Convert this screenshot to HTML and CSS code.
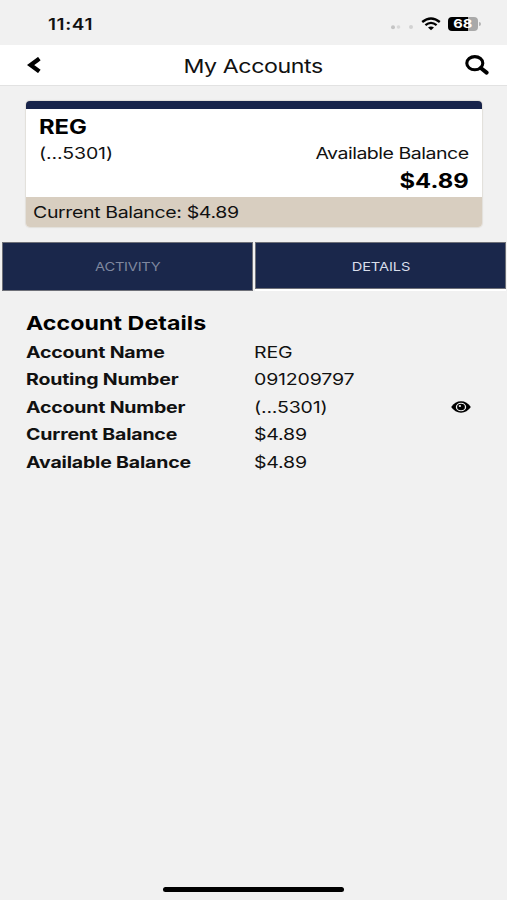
FILE: index.html
```html
<!DOCTYPE html>
<html lang="en">
<head>
    <meta charset="UTF-8">
    <meta name="viewport" content="width=device-width, initial-scale=1.0">
    <title>My Accounts</title>
    <link rel="stylesheet" href="styles.css">
</head>
<body>
    <div class="status-bar">
        <span class="time wide">11:41</span>
        <div class="status-icons">
            <svg class="signal" width="24" height="6" viewBox="0 0 24 6">
                <circle cx="3" cy="3.2" r="2" fill="#c4c4c4"/>
                <circle cx="8.5" cy="3" r="1.8" fill="#d9d9d9"/>
                <circle cx="21" cy="3" r="2" fill="#d2d2d2"/>
            </svg>
            <svg class="wifi" width="20" height="14" viewBox="0 0 20 14">
                <path d="M1.2 5 Q10 -2.2 18.8 5" fill="none" stroke="#000" stroke-width="2.4"/>
                <path d="M4.4 8.2 Q10 3.6 15.6 8.2" fill="none" stroke="#000" stroke-width="2.3"/>
                <path d="M7 10.6 Q10 8.4 13 10.6 L10 13.2 Z" fill="#000"/>
            </svg>
            <div class="battery"><span class="level wide">68</span></div>
            <div class="battery-tip"></div>
        </div>
    </div>

    <header class="header">
        <svg class="back" width="14" height="16" viewBox="0 0 14 16">
            <path d="M10.6 2.9 L3.6 8 L10.6 13.1" fill="none" stroke="#000" stroke-width="4.3" stroke-linecap="square"/>
        </svg>
        <h1 class="title wide">My Accounts</h1>
        <svg class="search" width="24" height="20" viewBox="0 0 24 20">
            <ellipse cx="9.8" cy="8.2" rx="8" ry="6.6" fill="none" stroke="#000" stroke-width="3.1"/>
            <path d="M15.8 13 L21.6 17.6" stroke="#000" stroke-width="4" stroke-linecap="round"/>
        </svg>
    </header>

    <section class="card">
        <div class="card-body">
            <div><span class="card-name wide">REG</span></div>
            <div class="card-row">
                <span class="card-number wide">(...5301)</span>
                <span class="card-label wide right">Available Balance</span>
            </div>
            <div class="card-row end"><span class="card-amount wide right">$4.89</span></div>
        </div>
        <div class="card-footer"><span class="card-current wide">Current Balance: $4.89</span></div>
    </section>

    <nav class="tabs">
        <button class="tab"><span class="wide center">ACTIVITY</span></button>
        <button class="tab active"><span class="wide center">DETAILS</span></button>
    </nav>

    <main class="details">
        <h2 class="wide">Account Details</h2>
        <dl>
            <dt><span class="wide">Account Name</span></dt>
            <dd><span class="wide">REG</span></dd>
            <dt><span class="wide">Routing Number</span></dt>
            <dd><span class="wide">091209797</span></dd>
            <dt><span class="wide">Account Number</span></dt>
            <dd>
                <span class="wide">(...5301)</span>
                <svg class="eye" width="20" height="12" viewBox="0 0 20 12">
                    <path d="M0.2 6 Q4 0.3 10 0.3 Q16 0.3 19.8 6 Q16 11.7 10 11.7 Q4 11.7 0.2 6 Z" fill="#000"/>
                    <ellipse cx="10" cy="6" rx="5.2" ry="4.3" fill="#f1f1f1"/>
                    <ellipse cx="10" cy="6" rx="3.9" ry="3.2" fill="#000"/>
                    <ellipse cx="8.9" cy="4.9" rx="1.2" ry="1" fill="#f1f1f1"/>
                </svg>
            </dd>
            <dt><span class="wide">Current Balance</span></dt>
            <dd><span class="wide">$4.89</span></dd>
            <dt><span class="wide">Available Balance</span></dt>
            <dd><span class="wide">$4.89</span></dd>
        </dl>
    </main>

    <div class="home-indicator"></div>
</body>
</html>
```
FILE: styles.css
```css
* {
    box-sizing: border-box;
}

body {
    margin: 0;
    height: 900px;
    display: flex;
    flex-direction: column;
    overflow: hidden;
    font-family: Inter, "Liberation Sans", sans-serif;
    background-color: #f1f1f1;
    color: #111;
}

/* Extended letterforms */
.wide {
    display: inline-block;
    white-space: nowrap;
    transform: scaleX(1.22);
    transform-origin: left center;
}

.wide.right {
    transform-origin: right center;
}

.wide.center {
    transform-origin: center;
}

.status-bar {
    height: 45px;
    padding: 2px 26px 0 48px;
    display: flex;
    align-items: center;
    justify-content: space-between;
}

.time {
    padding-top: 1px;
    font-size: 15.5px;
    font-weight: 600;
    letter-spacing: 0.5px;
}

.status-icons {
    display: flex;
    align-items: center;
}

.signal {
    margin: 7px 7px 0 0;
}

.wifi {
    margin-right: 7px;
}

.battery {
    width: 30px;
    height: 14px;
    border-radius: 4px;
    background: linear-gradient(to right, #000 68%, #a9a9a9 68%);
    display: flex;
    align-items: center;
    justify-content: center;
}

.level {
    font-size: 12px;
    font-weight: 700;
    line-height: 14px;
    color: #fff;
    transform-origin: center;
}

.battery-tip {
    width: 2px;
    height: 4px;
    margin-left: 1px;
    border-radius: 0 2px 2px 0;
    background-color: #b5b5b5;
}

.header {
    height: 41px;
    padding: 0 18px 0 27px;
    display: flex;
    align-items: center;
    justify-content: space-between;
    background-color: #fff;
    border-bottom: 1px solid #e2e2e2;
}

.title {
    margin: 2px 0 0;
    font-size: 19px;
    font-weight: 400;
    letter-spacing: -0.35px;
    transform-origin: center;
}

.card {
    height: 126px;
    margin: 15px 25px 0 26px;
    display: flex;
    flex-direction: column;
    border-top: 8px solid #18244a;
    border-radius: 4px;
    background-color: #fff;
    box-shadow: 0 0 1px 1px #e2dfda;
    overflow: hidden;
}

.card-body {
    flex: 1;
    padding: 4px 13px 0;
}

.card-body > div {
    height: 27px;
    line-height: 27px;
}

.card-row {
    display: flex;
    justify-content: space-between;
}

.card-row.end {
    justify-content: flex-end;
}

.card-name,
.card-amount {
    padding-top: 1px;
    font-size: 19.5px;
    font-weight: 700;
    color: #000;
}

.card-number,
.card-label,
.card-current {
    font-size: 16px;
    letter-spacing: -0.3px;
}

.card-number {
    letter-spacing: -0.1px;
}

.card-label {
    letter-spacing: -0.4px;
}

.card-footer {
    height: 30px;
    padding-left: 7px;
    line-height: 31px;
    background-color: #d8cec0;
}

.tabs {
    margin-top: 15px;
    padding: 0 1px 0 2px;
    display: flex;
    align-items: flex-start;
    gap: 2px;
}

.tab {
    flex: 1;
    height: 49px;
    padding: 0;
    border: 1px solid #6e7078;
    background-color: #1a274b;
    color: #7f879f;
    font-family: inherit;
    font-size: 12px;
    letter-spacing: -0.2px;
}

.tab.active {
    height: 47px;
    padding-top: 1px;
    color: #d9deeb;
    letter-spacing: -0.1px;
    box-shadow: 0 2px 0 #fff;
}

.details {
    flex: 1;
    padding: 19px 26px 0;
}

.details h2 {
    margin: 0;
    font-size: 19px;
    font-weight: 700;
    line-height: 27px;
    letter-spacing: 0.05px;
    color: #000;
}

.details dl {
    margin: 2px 0 0;
    display: grid;
    grid-template-columns: 228px 1fr;
    grid-auto-rows: 27.4px;
    font-size: 16px;
    line-height: 27.4px;
}

.details dt {
    font-weight: 700;
    letter-spacing: -0.15px;
}

.details dd {
    margin: 0;
    display: flex;
    align-items: center;
    justify-content: space-between;
    letter-spacing: -0.15px;
}

.eye {
    margin-right: 10px;
}

.home-indicator {
    width: 181px;
    height: 5px;
    margin: 0 auto 8px;
    border-radius: 3px;
    background-color: #000;
}
```
